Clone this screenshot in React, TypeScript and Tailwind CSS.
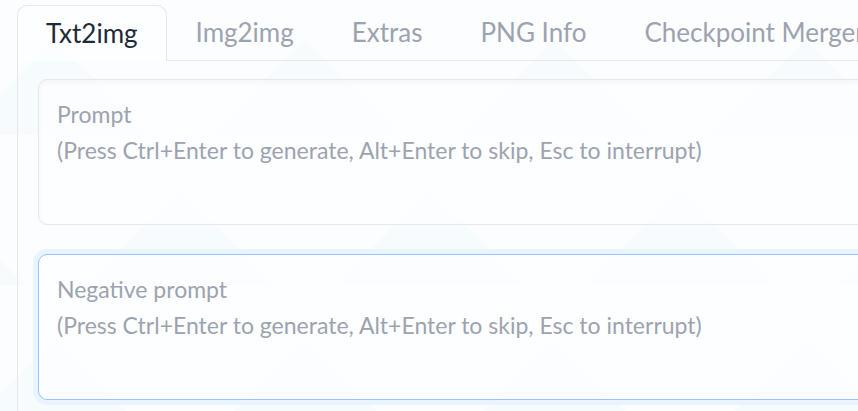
import React from "react";

const tabs = ["Img2img", "Extras", "PNG Info", "Checkpoint Merger"];

function Pattern() {
  const tris: React.ReactElement[] = [];
  for (let row = 0; row < 3; row++) {
    for (let i = -1; i < 5; i++) {
      const x = i * 250 + (row % 2 === 0 ? 0 : 125) - 40;
      const y = row * 150 + 40;
      tris.push(
        <polygon
          key={`${row}-${i}`}
          points={`${x},${y + 95} ${x + 95},${y} ${x + 190},${y + 95}`}
          fill="#eff8fd"
          opacity="0.45"
        />
      );
    }
  }
  return (
    <svg className="absolute inset-0 pointer-events-none" width="858" height="411">
      {tris}
    </svg>
  );
}

export default function App() {
  return (
    <div className="relative w-[858px] h-[411px] overflow-hidden bg-[#fbfdff] font-['Lato','Noto_Sans',sans-serif]">
      <Pattern />
      <div className="relative pl-[17px] pt-[5px]">
        <div className="flex h-[56px]">
          <div className="shrink-0 h-full px-[28px] border border-b-0 border-[#e5e7eb] rounded-t-[10px] bg-white/60 flex items-center text-[26px] text-[#1f2937]">
            Txt2img
          </div>
          <div className="flex-1 flex h-full items-center border-b border-[#e5e7eb] whitespace-nowrap">
            {tabs.map((t) => (
              <div key={t} className="px-[29px] text-[26px] text-[#9ca3af]">
                {t}
              </div>
            ))}
          </div>
        </div>
        <div className="border-l border-[#e5e7eb] pl-[20px] pt-[18px] h-[360px] flex flex-col gap-[29px]">
          <div className="w-[900px] h-[146px] shrink-0 rounded-[9px] border border-[#e5e7eb] bg-white/50 shadow-[inset_0_3px_6px_rgba(0,0,0,0.035)] pl-[18px] pt-[16px] text-[23px] leading-[36px] text-[#9ca3af]">
            <div>Prompt</div>
            <div>(Press Ctrl+Enter to generate, Alt+Enter to skip, Esc to interrupt)</div>
          </div>
          <div className="w-[900px] h-[146px] shrink-0 rounded-[9px] border border-[#93c5fd] bg-white/50 shadow-[0_0_0_5px_#eaf4ff] pl-[18px] pt-[16px] text-[23px] leading-[36px] text-[#9ca3af]">
            <div>Negative prompt</div>
            <div>(Press Ctrl+Enter to generate, Alt+Enter to skip, Esc to interrupt)</div>
          </div>
        </div>
      </div>
    </div>
  );
}
